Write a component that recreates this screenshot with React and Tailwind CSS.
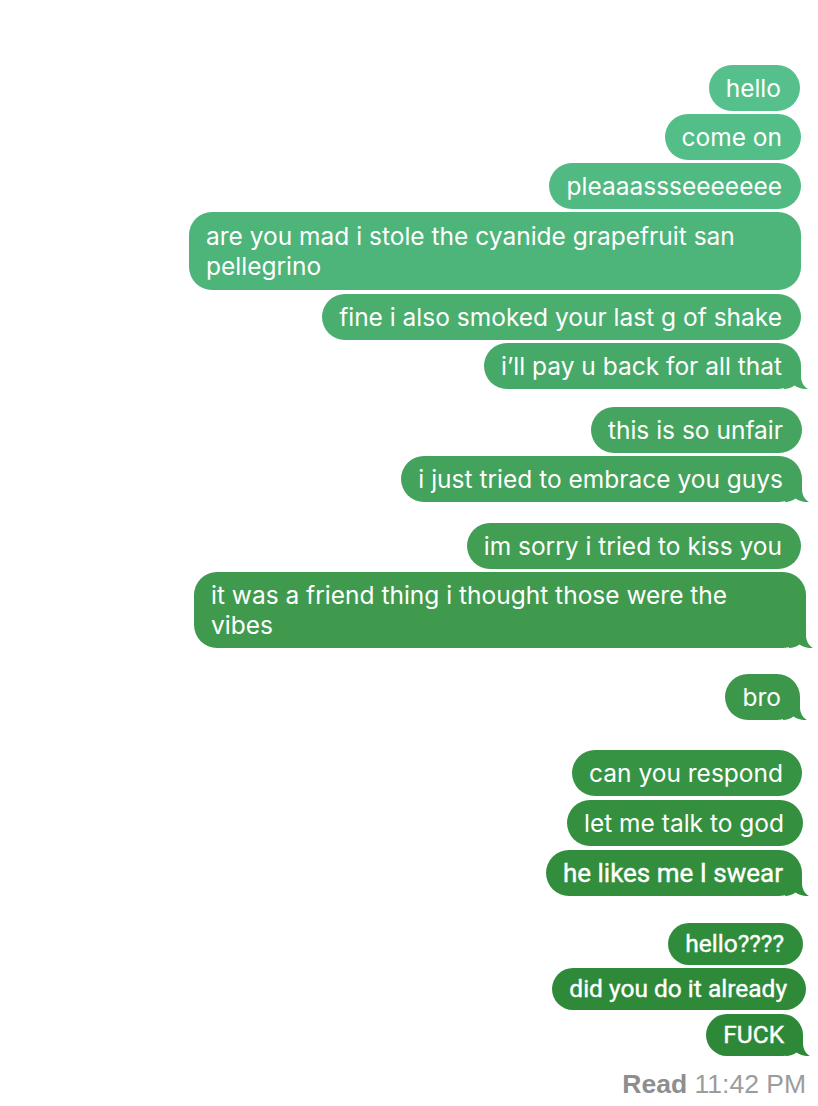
const messages = [
  { text: "hello", bg: "bg-[#55c08b]", tailColor: "text-[#55c08b]", gap: "mt-0", mr: "mr-[18px]" },
  { text: "come on", bg: "bg-[#53be88]", tailColor: "text-[#53be88]", gap: "mt-[3px]", mr: "mr-[17px]" },
  { text: "pleaaassseeeeeee", bg: "bg-[#51ba82]", tailColor: "text-[#51ba82]", gap: "mt-[3px]", mr: "mr-[17px]" },
  {
    text: "are you mad i stole the cyanide grapefruit san\npellegrino",
    bg: "bg-[#4db47a]",
    tailColor: "text-[#4db47a]",
    gap: "mt-[3px]",
    mr: "mr-[17px]",
    w: "w-[612px] py-[9px]",
  },
  { text: "fine i also smoked your last g of shake", bg: "bg-[#4aae6e]", tailColor: "text-[#4aae6e]", gap: "mt-[4px]", mr: "mr-[17px]" },
  { text: "i’ll pay u back for all that", bg: "bg-[#47a967]", tailColor: "text-[#47a967]", gap: "mt-[3px]", mr: "mr-[17px]", tail: true },
  { text: "this is so unfair", bg: "bg-[#45a560]", tailColor: "text-[#45a560]", gap: "mt-[18px]", mr: "mr-[16px]" },
  { text: "i just tried to embrace you guys", bg: "bg-[#43a25b]", tailColor: "text-[#43a25b]", gap: "mt-[3px]", mr: "mr-[16px]", tail: true },
  { text: "im sorry i tried to kiss you", bg: "bg-[#419e53]", tailColor: "text-[#419e53]", gap: "mt-[21px]", mr: "mr-[17px]" },
  {
    text: "it was a friend thing i thought those were the\nvibes",
    bg: "bg-[#3f9a4d]",
    tailColor: "text-[#3f9a4d]",
    gap: "mt-[3px]",
    mr: "mr-[12px]",
    w: "w-[612px]",
    tail: true,
  },
  { text: "bro", bg: "bg-[#3d974a]", tailColor: "text-[#3d974a]", gap: "mt-[26px]", mr: "mr-[18px]", tail: true },
  { text: "can you respond", bg: "bg-[#379344]", tailColor: "text-[#379344]", gap: "mt-[30px]", mr: "mr-[16px]" },
  { text: "let me talk to god", bg: "bg-[#34903f]", tailColor: "text-[#34903f]", gap: "mt-[4px]", mr: "mr-[15px]" },
  { text: "he likes me I swear", bg: "bg-[#328e3d]", tailColor: "text-[#328e3d]", gap: "mt-[4px]", mr: "mr-[16px]", tail: true, alt: true },
  { text: "hello????", bg: "bg-[#2f8c3a]", tailColor: "text-[#2f8c3a]", gap: "mt-[27px]", mr: "mr-[15px]", alt: true, small: true },
  { text: "did you do it already", bg: "bg-[#2e8a39]", tailColor: "text-[#2e8a39]", gap: "mt-[3px]", mr: "mr-[12px]", alt: true, small: true },
  { text: "FUCK", bg: "bg-[#2d8938]", tailColor: "text-[#2d8938]", gap: "mt-[4px]", mr: "mr-[15px]", tail: true, alt: true, small: true },
];

function Tail({ color }) {
  return (
    <svg
      viewBox="0 0 24 22"
      className={`absolute -right-[7px] bottom-0 h-[22px] w-[24px] ${color}`}
      fill="currentColor"
    >
      <path d="M0 0 H17 V9 C17 15 19.5 19.5 24 22 C18.5 22.4 14 21 10.5 18.6 C7.5 20.8 4 22 0 22 Z" />
    </svg>
  );
}

function Bubble({ message }) {
  let type;
  if (message.small) {
    type =
      "font-['Roboto',sans-serif] text-[24.5px] leading-[28px] py-[7px] [-webkit-text-stroke:0.4px_white]";
  } else if (message.alt) {
    type =
      "font-['Roboto',sans-serif] text-[26px] leading-[30px] py-[8px] [-webkit-text-stroke:0.4px_white]";
  } else {
    type = "font-['Inter',sans-serif] text-[24.5px] leading-[30px] py-[8px]";
  }
  return (
    <div
      className={`relative rounded-[23px] pl-[17px] pr-[19px] text-white whitespace-pre-line ${type} ${message.bg} ${message.gap} ${message.mr} ${message.w ?? ""}`}
    >
      {message.text}
      {message.tail && <Tail color={message.tailColor} />}
    </div>
  );
}

export default function App() {
  return (
    <div className="min-h-[1106px] w-full bg-white flex flex-col items-end pt-[65px]">
      {messages.map((m, i) => (
        <Bubble key={i} message={m} />
      ))}
      <div className="mt-[13px] mr-[12px] text-[26.5px] leading-[30px] font-['Liberation_Sans',Arial,sans-serif]">
        <span className="font-bold text-[#8e8e8e]">Read</span>
        <span className="text-[#9c9c9c]"> 11:42 PM</span>
      </div>
    </div>
  );
}
